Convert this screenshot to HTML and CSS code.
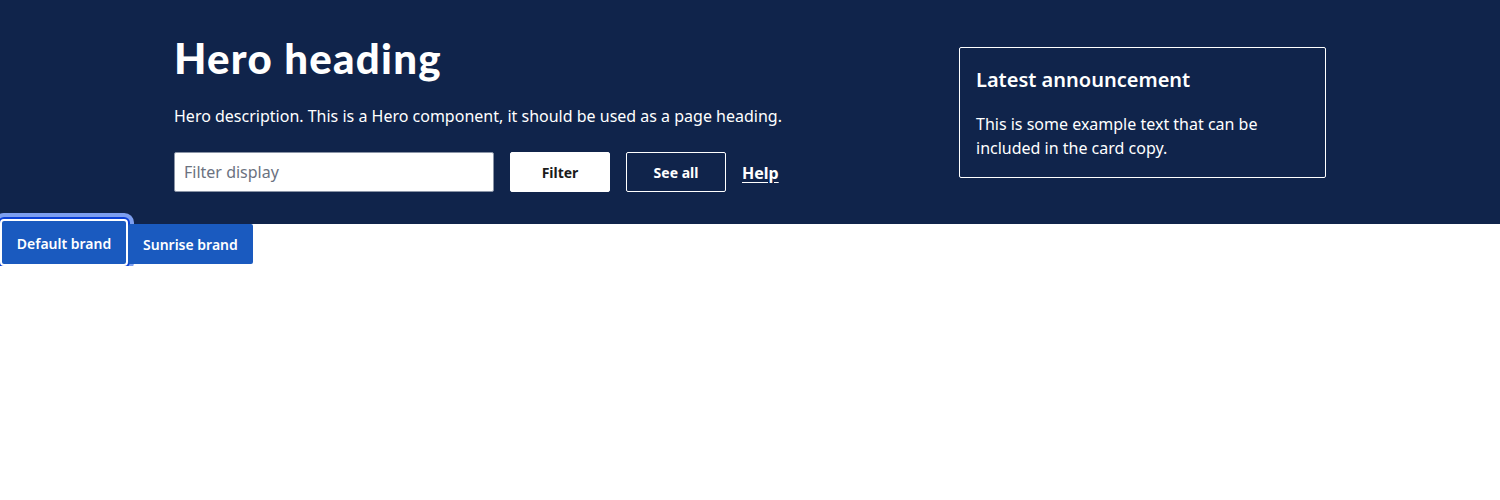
FILE: index.html
```html
<!DOCTYPE html>
<html lang="en">
<head>
<meta charset="utf-8">
<title>Hero</title>
<link rel="stylesheet" href="styles.css">
</head>
<body>
<section class="hero">
  <div class="hero-inner">
    <div class="hero-main">
      <h1 class="hero-title">Hero heading</h1>
      <p class="hero-desc">Hero description. This is a Hero component, it should be used as a page heading.</p>
      <div class="hero-actions">
        <input class="filter-input" type="text" placeholder="Filter display">
        <button class="btn btn-light">Filter</button>
        <button class="btn btn-outline">See all</button>
        <a class="help-link" href="#">Help</a>
      </div>
    </div>
    <aside class="card">
      <h2 class="card-title">Latest announcement</h2>
      <p class="card-text">This is some example text that can be included in the card copy.</p>
    </aside>
  </div>
</section>
<div class="brand-switch">
  <button class="brand-btn brand-btn-active">Default brand</button>
  <button class="brand-btn">Sunrise brand</button>
</div>
</body>
</html>
```

FILE: styles.css
```css
* { box-sizing: border-box; }
html, body { margin: 0; padding: 0; background: #fff; }
body { font-family: "Noto Sans", "Open Sans", sans-serif; color: #fff; }

.hero {
  background: #10244b;
  height: 224px;
}
.hero-inner {
  max-width: 1152px;
  margin: 0 auto;
  display: flex;
  justify-content: space-between;
  align-items: flex-start;
  padding-top: 30px;
}
.hero-title {
  font-family: "Lato", sans-serif;
  font-weight: 900;
  font-size: 42px;
  line-height: 56px;
  margin: 0;
  letter-spacing: 1.25px;
}
.hero-desc {
  margin: 18px 0 0;
  font-size: 16px;
  line-height: 24px;
}
.hero-actions {
  margin-top: 24px;
  display: flex;
  align-items: center;
  gap: 16px;
}
.filter-input {
  width: 320px;
  height: 40px;
  border: 1px solid #8a94a6;
  border-radius: 2px;
  padding: 0 9px;
  font-family: "Noto Sans", sans-serif;
  font-size: 16px;
  color: #222;
  background: #fff;
}
.filter-input::placeholder { color: #6b7280; }
.btn {
  width: 100px;
  height: 40px;
  border-radius: 2px;
  font-family: "Noto Sans", sans-serif;
  font-weight: 700;
  font-size: 14px;
  cursor: pointer;
}
.btn-light { background: #fff; color: #1b1b1b; border: 1px solid #fff; }
.btn-outline { background: transparent; color: #fff; border: 1px solid #fff; }
.help-link {
  color: #fff;
  font-weight: 700;
  font-size: 16px;
  text-decoration: underline;
  text-underline-offset: 3px;
  margin-top: 2px;
}
.card {
  width: 367px;
  margin-top: 17px;
  border: 1px solid #fff;
  border-radius: 2px;
  padding: 18px 16px 17px;
}
.card-title {
  margin: 0;
  font-size: 20px;
  font-weight: 600;
  line-height: 28px;
}
.card-text {
  margin: 18px 0 0;
  font-size: 16px;
  line-height: 24px;
}

.brand-switch {
  display: flex;
  align-items: flex-start;
}
.brand-btn {
  position: relative;
  height: 40px;
  padding: 0 15px;
  border: none;
  border-radius: 2px;
  background: #1a5abf;
  color: #fff;
  font-family: "Noto Sans", sans-serif;
  font-weight: 600;
  font-size: 14px;
  white-space: nowrap;
}
.brand-btn-active {
  width: 128px;
  height: 47px;
  margin-top: -5px;
  padding: 2px 0 0;
  border: 2px solid #fff;
  border-radius: 4px;
  box-shadow: 0 0 0 2px #0a3fd6, 0 0 0 6px #7d9ff0;
  z-index: 0;
}
.brand-btn + .brand-btn { z-index: 1; }
```
